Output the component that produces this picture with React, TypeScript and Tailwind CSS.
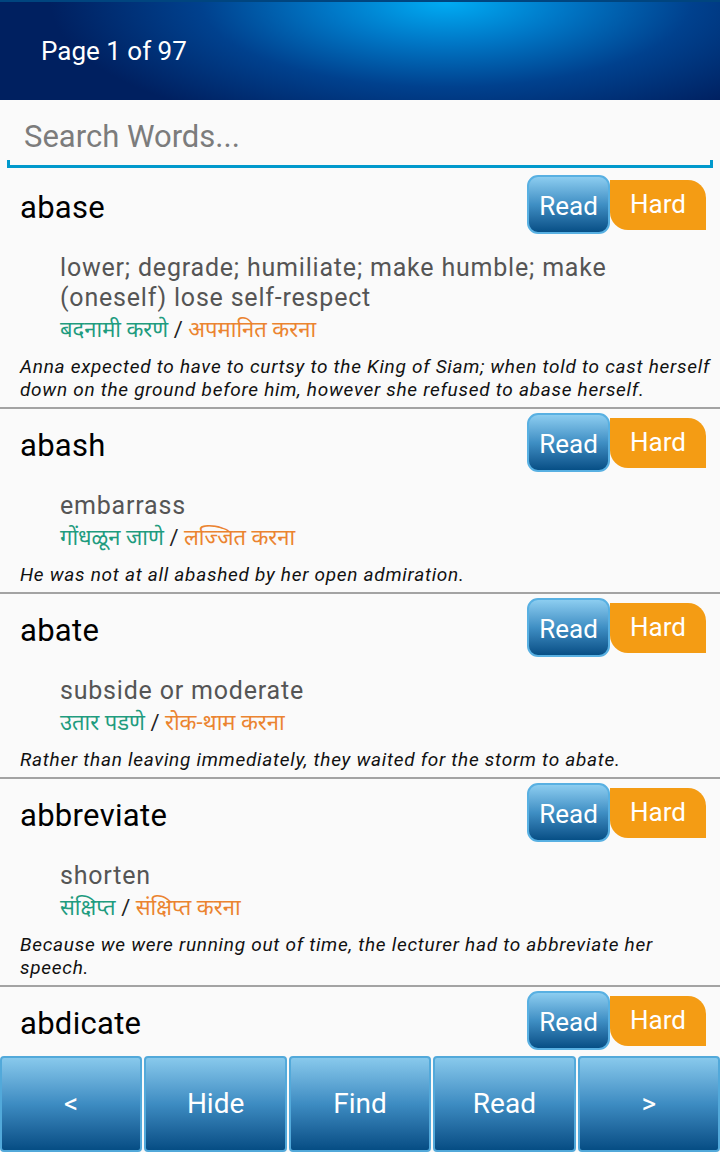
import React from "react";

interface Word {
  word: string;
  meaning: string;
  marathi: string;
  hindi: string;
  example: string;
}

const words: Word[] = [
  {
    word: "abase",
    meaning: "lower; degrade; humiliate; make humble; make (oneself) lose self-respect",
    marathi: "बदनामी करणे",
    hindi: "अपमानित करना",
    example:
      "Anna expected to have to curtsy to the King of Siam; when told to cast herself down on the ground before him, however she refused to abase herself.",
  },
  {
    word: "abash",
    meaning: "embarrass",
    marathi: "गोंधळून जाणे",
    hindi: "लज्जित करना",
    example: "He was not at all abashed by her open admiration.",
  },
  {
    word: "abate",
    meaning: "subside or moderate",
    marathi: "उतार पडणे",
    hindi: "रोक-थाम करना",
    example: "Rather than leaving immediately, they waited for the storm to abate.",
  },
  {
    word: "abbreviate",
    meaning: "shorten",
    marathi: "संक्षिप्त",
    hindi: "संक्षिप्त करना",
    example: "Because we were running out of time, the lecturer had to abbreviate her speech.",
  },
  {
    word: "abdicate",
    meaning: "renounce; give up",
    marathi: "पदत्याग करणे",
    hindi: "त्याग देना",
    example: "When Edward VIII abdicated the British throne, he surprised the entire world.",
  },
];

const font = { fontFamily: "Roboto, 'Noto Sans', 'Noto Sans Devanagari', sans-serif" };

function WordRow({ entry }: { entry: Word }) {
  return (
    <div className="border-b-2 border-[#a3a3a3] pt-[4px] pb-[6px]">
      <div className="flex h-[59px] items-center justify-between pl-[20px] pr-[14px]">
        <h2 className="mt-[6px] text-[31px] leading-none tracking-[0.3px] text-black">{entry.word}</h2>
        <div className="flex items-center">
          <button className="h-[59px] w-[83px] rounded-[11px] border-2 border-[#58b0e2] bg-gradient-to-b from-[#8ccdf0] via-[#3f8fc4] to-[#064f86] pt-[3px] text-[26px] text-white">
            Read
          </button>
          <button className="h-[50px] w-[96px] rounded-tr-[18px] rounded-bl-[18px] bg-[#f49c14] text-[26px] text-white">
            Hard
          </button>
        </div>
      </div>
      <p className="mt-[19px] pl-[60px] pr-[30px] text-[25px] leading-[30px] tracking-[0.8px] text-[#555555]">
        {entry.meaning}
      </p>
      <p className="h-[34px] overflow-hidden pl-[60px] text-[22px] leading-[34px]">
        <span className="text-[#1f9c7f]">{entry.marathi}</span>
        <span className="text-[#222222]"> / </span>
        <span className="text-[#eb8430]">{entry.hindi}</span>
      </p>
      <p className="mt-[8px] pl-[20px] pr-[8px] text-[19px] italic leading-[23px] tracking-[0.72px] text-[#111111]">
        {entry.example}
      </p>
    </div>
  );
}

export default function App() {
  const bar = ["<", "Hide", "Find", "Read", ">"];
  return (
    <div className="flex h-[1152px] w-[720px] flex-col overflow-hidden bg-[#fafafa]" style={font}>
      <header className="flex h-[100px] shrink-0 items-center border-t-2 border-[#00457f] bg-[radial-gradient(ellipse_55%_140%_at_62%_0%,#00acf4_0%,#0077c6_30%,#00418e_62%,#002060_100%)] pl-[41px]">
        <h1 className="text-[26px] text-white">Page 1 of 97</h1>
      </header>

      <div className="h-[71px] shrink-0 px-[7px] pt-[12px]">
        <div className="flex h-[48px] items-center px-[17px]">
          <input
            className="w-full bg-transparent text-[31px] leading-none text-[#777777] outline-none placeholder:text-[#7c7c7c]"
            placeholder="Search Words..."
          />
        </div>
        <div className="flex items-end">
          <span className="h-[8px] w-[3px] bg-[#0099cc]" />
          <span className="h-[3px] flex-1 bg-[#0099cc]" />
          <span className="h-[8px] w-[3px] bg-[#0099cc]" />
        </div>
      </div>

      <div className="min-h-0 flex-1 overflow-hidden">
        {words.map((w) => (
          <WordRow key={w.word} entry={w} />
        ))}
      </div>

      <nav className="grid h-[96px] shrink-0 grid-cols-5 gap-[2px]">
        {bar.map((label) => (
          <button
            key={label}
            className="flex items-center justify-center rounded-[4px] border-2 border-[#52a9da] bg-gradient-to-b from-[#88c9ec] via-[#3d8cc2] to-[#054d84] text-[28px] leading-none text-white"
          >
            {label}
          </button>
        ))}
      </nav>
    </div>
  );
}
